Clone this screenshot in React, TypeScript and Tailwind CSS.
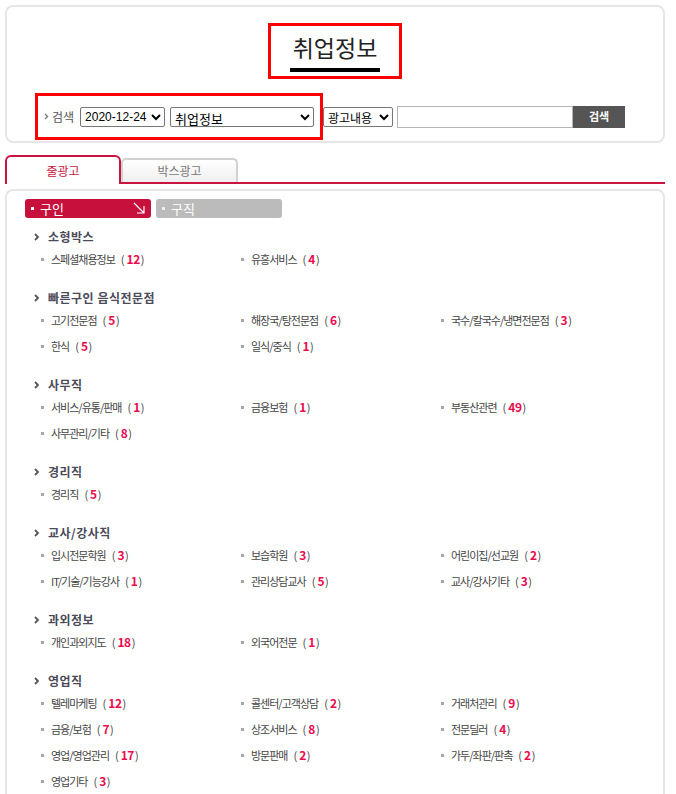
import React from 'react';

type Item = { name: string; count: number };
type Section = { title: string; items: Item[] };

const sections: Section[] = [
  { title: '소형박스', items: [{ name: '스페셜채용정보', count: 12 }, { name: '유흥서비스', count: 4 }] },
  {
    title: '빠른구인 음식전문점',
    items: [
      { name: '고기전문점', count: 5 },
      { name: '해장국/탕전문점', count: 6 },
      { name: '국수/칼국수/냉면전문점', count: 3 },
      { name: '한식', count: 5 },
      { name: '일식/중식', count: 1 },
    ],
  },
  {
    title: '사무직',
    items: [
      { name: '서비스/유통/판매', count: 1 },
      { name: '금융보험', count: 1 },
      { name: '부동산관련', count: 49 },
      { name: '사무관리/기타', count: 8 },
    ],
  },
  { title: '경리직', items: [{ name: '경리직', count: 5 }] },
  {
    title: '교사/강사직',
    items: [
      { name: '입시전문학원', count: 3 },
      { name: '보습학원', count: 3 },
      { name: '어린이집/선교원', count: 2 },
      { name: 'IT/기술/기능강사', count: 1 },
      { name: '관리상담교사', count: 5 },
      { name: '교사/강사기타', count: 3 },
    ],
  },
  { title: '과외정보', items: [{ name: '개인과외지도', count: 18 }, { name: '외국어전문', count: 1 }] },
  {
    title: '영업직',
    items: [
      { name: '텔레마케팅', count: 12 },
      { name: '콜센터/고객상담', count: 2 },
      { name: '거래처관리', count: 9 },
      { name: '금융/보험', count: 7 },
      { name: '상조서비스', count: 8 },
      { name: '전문딜러', count: 4 },
      { name: '영업/영업관리', count: 17 },
      { name: '방문판매', count: 2 },
      { name: '가두/좌판/판촉', count: 2 },
      { name: '영업기타', count: 3 },
    ],
  },
];

function HeadArrow() {
  return (
    <svg width="6" height="8" viewBox="0 0 6 8" className="mr-[8px] shrink-0">
      <path d="M1 1 L4 4 L1 7" stroke="#555" strokeWidth="1.8" fill="none" />
    </svg>
  );
}

function CornerArrow() {
  return (
    <svg width="13" height="13" viewBox="0 0 13 13">
      <path d="M1 1 L11 11 M11 4 V11 H4" stroke="#fff" strokeWidth="1.2" fill="none" />
    </svg>
  );
}

export default function App() {
  return (
    <div className="w-[676px] min-h-[794px] bg-white pt-[5px] pl-[5px] font-['Noto_Sans_CJK_KR',sans-serif] text-[#444]">
      {/* Header panel */}
      <div className="w-[660px] h-[138px] border-2 border-[#e6e6e6] rounded-[8px] flex flex-col">
        <div className="flex justify-center pt-[16px]">
          <div className="w-[134px] h-[56px] border-[3px] border-[#ff0000] flex flex-col items-center pt-[6px]">
            <div className="text-[23px] leading-[30px] text-[#222]">취업정보</div>
            <div className="w-[90px] h-[4px] bg-black mt-[6px]" />
          </div>
        </div>
        <div className="flex items-center mt-[14px] ml-[28px]">
          <div className="w-[288px] h-[47px] border-[3px] border-[#ff0000] flex items-center pl-[6px]">
            <svg width="5" height="7" viewBox="0 0 5 7" className="mr-[3px]">
              <path d="M1 1 L3.5 3.5 L1 6" stroke="#777" strokeWidth="1.4" fill="none" />
            </svg>
            <span className="text-[12px] text-[#555] mr-[6px]">검색</span>
            <select className="w-[85px] h-[20px] border border-[#767676] rounded-[2px] text-[12px] font-['Liberation_Sans',sans-serif] text-black mr-[5px] bg-white px-0">
              <option>2020-12-24</option>
            </select>
            <select className="w-[144px] h-[20px] border border-[#767676] rounded-[2px] text-[13px] text-black bg-white">
              <option>취업정보</option>
            </select>
          </div>
          <select className="w-[70px] h-[20px] border border-[#767676] rounded-[2px] text-[12px] text-black bg-white mr-[4px]">
            <option>광고내용</option>
          </select>
          <input className="w-[176px] h-[22px] border border-[#b5b5b5]" />
          <button className="w-[52px] h-[22px] bg-[#555] text-white text-[11px] font-bold">검색</button>
        </div>
      </div>

      {/* Tabs */}
      <div className="w-[660px] flex items-end mt-[12px] border-b-2 border-[#c8143f]">
        <div className="relative z-10 -mb-[2px] w-[116px] h-[29px] border-2 border-b-0 border-[#c8143f] rounded-t-[6px] bg-white flex items-center justify-center text-[12px] text-[#c8143f]">
          줄광고
        </div>
        <div className="w-[117px] h-[24px] border-2 border-b-0 border-[#d2d2d2] rounded-t-[5px] bg-gradient-to-b from-white to-[#efefef] flex items-center justify-center text-[12px] text-[#777]">
          박스광고
        </div>
      </div>

      {/* Content panel */}
      <div className="w-[660px] mt-[5px] border-2 border-[#e6e6e6] rounded-[8px] pt-[8px] pl-[18px] pb-[20px]">
        <div className="flex gap-[5px]">
          <div className="w-[126px] h-[19px] bg-[#c8103d] rounded-[3px] flex items-center pl-[6px] pr-[5px] text-white text-[13px]">
            <span className="w-[3px] h-[3px] bg-white mr-[6px]" />
            <span className="flex-1 leading-none">구인</span>
            <CornerArrow />
          </div>
          <div className="w-[126px] h-[19px] bg-[#bbbbbb] rounded-[3px] flex items-center pl-[6px] text-white text-[13px]">
            <span className="w-[3px] h-[3px] bg-[#eee] mr-[6px]" />
            <span className="leading-none">구직</span>
          </div>
        </div>

        <div className="mt-[10px] pl-[9px]">
          {sections.map((s) => (
            <div key={s.title} className="mb-[17px]">
              <div className="h-[18px] flex items-center">
                <HeadArrow />
                <span className="text-[12px] font-bold tracking-[0.5px] text-[#4a4a58]">{s.title}</span>
              </div>
              <div className="grid grid-cols-[200px_200px_200px] pl-[7px]">
                {s.items.map((it) => (
                  <div key={it.name} className="h-[26px] flex items-center text-[11px] tracking-[-1px] text-[#444]">
                    <span className="w-[3px] h-[3px] bg-[#a6a6a6] mr-[7px] shrink-0" />
                    <span>{it.name}</span>
                    <span className="ml-[6px] mr-[3px]">(</span>
                    <span className="font-bold text-[12px] tracking-[-0.5px] text-[#ec0a4f]">{it.count}</span>
                    <span className="ml-[1px]">)</span>
                  </div>
                ))}
              </div>
            </div>
          ))}
        </div>
      </div>
    </div>
  );
}
